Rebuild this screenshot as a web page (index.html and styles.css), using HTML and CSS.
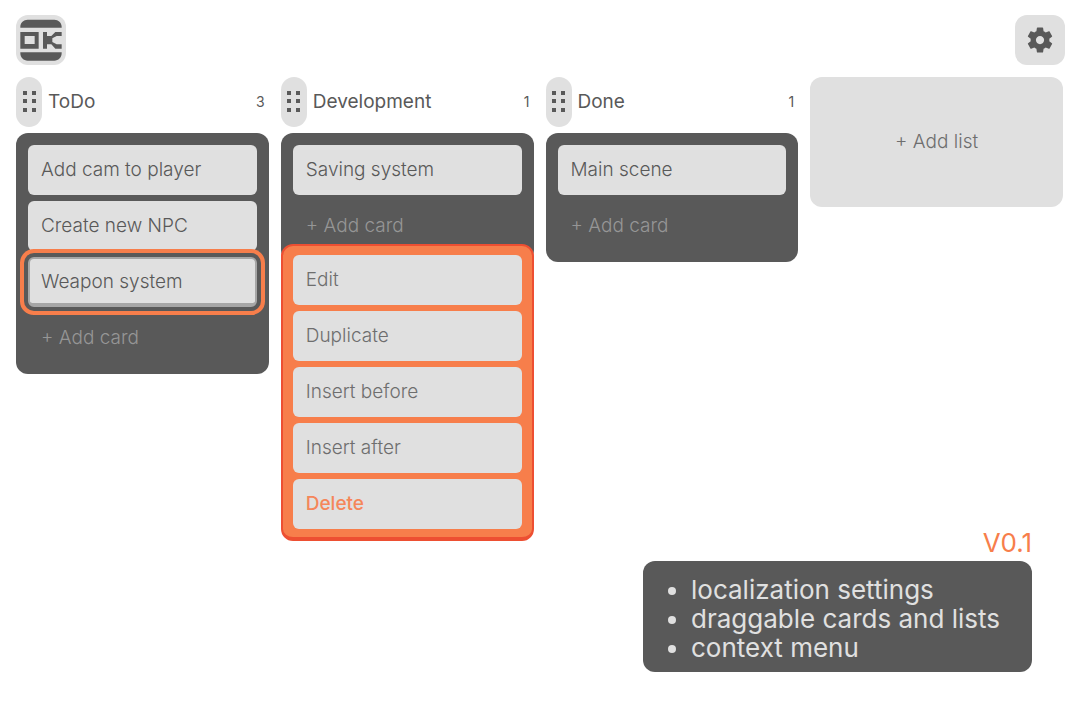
FILE: index.html
```html
<!DOCTYPE html>
<html lang="en">
<head>
<meta charset="utf-8">
<title>Kanban board</title>
<link rel="stylesheet" href="styles.css">
</head>
<body class="app">
<header class="topbar">
  <button class="tile" type="button" aria-label="Home">
    <svg class="logo" viewBox="0 0 148 150" aria-hidden="true">
      <path d="M12 38V35C12 23 22 14 34 14H114C126 14 136 23 136 35V38ZM12 112V115C12 128 22 137 34 137H114C126 137 136 128 136 115V112Z"/>
      <path fill-rule="evenodd" d="M12 51H67V101H12ZM25 63V87H55V63Z"/>
      <path d="M80 51H92V63H105L117 51H136V63H121L108 70V81L121 88H136V101H117L105 88H92V101H80Z"/>
    </svg>
  </button>
  <button class="tile" type="button" aria-label="Settings">
    <svg class="gear" viewBox="0 0 24 24" aria-hidden="true">
      <path d="M19.43 12.98c.04-.32.07-.64.07-.98s-.03-.66-.07-.98l2.11-1.65c.19-.15.24-.42.12-.64l-2-3.46c-.12-.22-.39-.3-.61-.22l-2.49 1c-.52-.4-1.08-.73-1.69-.98l-.38-2.65C14.46 2.18 14.25 2 14 2h-4c-.25 0-.46.18-.49.42l-.38 2.65c-.61.25-1.17.59-1.69.98l-2.49-1c-.23-.09-.49 0-.61.22l-2 3.46c-.13.22-.07.49.12.64l2.11 1.65c-.04.32-.07.65-.07.98s.03.66.07.98l-2.11 1.65c-.19.15-.24.42-.12.64l2 3.46c.12.22.39.3.61.22l2.49-1c.52.4 1.08.73 1.69.98l.38 2.65c.03.24.24.42.49.42h4c.25 0 .46-.18.49-.42l.38-2.65c.61-.25 1.17-.59 1.69-.98l2.49 1c.23.09.49 0 .61-.22l2-3.46c.12-.22.07-.49-.12-.64l-2.11-1.65zM12 15.3c-1.8 0-3.3-1.5-3.3-3.3s1.5-3.3 3.3-3.3 3.3 1.5 3.3 3.3-1.5 3.3-3.3 3.3z"/>
    </svg>
  </button>
</header>

<main class="board">
  <section class="list">
    <div class="list-head">
      <button class="grip" type="button" aria-label="Move ToDo"><svg class="dots" viewBox="0 0 13 21" aria-hidden="true"><path d="M0 0h4v4H0zM9 0h4v4H9zM0 8h4v4H0zM9 8h4v4H9zM0 17h4v4H0zM9 17h4v4H9z"/></svg></button>
      <h2 class="title">ToDo</h2>
      <span class="count">3</span>
    </div>
    <div class="cards">
      <button class="card" type="button">Add cam to player</button>
      <button class="card" type="button">Create new NPC</button>
      <button class="card selected" type="button">Weapon system</button>
      <button class="card add" type="button">+ Add card</button>
    </div>
  </section>

  <section class="list">
    <div class="list-head">
      <button class="grip" type="button" aria-label="Move Development"><svg class="dots" viewBox="0 0 13 21" aria-hidden="true"><path d="M0 0h4v4H0zM9 0h4v4H9zM0 8h4v4H0zM9 8h4v4H9zM0 17h4v4H0zM9 17h4v4H9z"/></svg></button>
      <h2 class="title">Development</h2>
      <span class="count">1</span>
    </div>
    <div class="cards">
      <button class="card" type="button">Saving system</button>
      <button class="card add" type="button">+ Add card</button>
    </div>
    <div class="menu" role="menu">
      <button class="card" type="button" role="menuitem">Edit</button>
      <button class="card" type="button" role="menuitem">Duplicate</button>
      <button class="card" type="button" role="menuitem">Insert before</button>
      <button class="card" type="button" role="menuitem">Insert after</button>
      <button class="card danger" type="button" role="menuitem">Delete</button>
    </div>
  </section>

  <section class="list">
    <div class="list-head">
      <button class="grip" type="button" aria-label="Move Done"><svg class="dots" viewBox="0 0 13 21" aria-hidden="true"><path d="M0 0h4v4H0zM9 0h4v4H9zM0 8h4v4H0zM9 8h4v4H9zM0 17h4v4H0zM9 17h4v4H9z"/></svg></button>
      <h2 class="title">Done</h2>
      <span class="count">1</span>
    </div>
    <div class="cards">
      <button class="card" type="button">Main scene</button>
      <button class="card add" type="button">+ Add card</button>
    </div>
  </section>

  <button class="add-list" type="button">+ Add list</button>
</main>

<footer class="release">
  <p class="version">V0.1</p>
  <ul class="changes">
    <li>localization settings</li>
    <li>draggable cards and lists</li>
    <li>context menu</li>
  </ul>
</footer>
</body>
</html>
```

FILE: styles.css
```css
* { box-sizing: border-box; }

.app {
  margin: 0;
  min-height: 100vh;
  display: flex;
  flex-direction: column;
  background: #fff;
  color: #595959;
  font-family: Inter, "Liberation Sans", sans-serif;
}

button {
  font: inherit;
  color: inherit;
  border: 0;
  padding: 0;
  cursor: pointer;
}

svg { display: block; fill: #595959; }

.topbar {
  display: flex;
  justify-content: space-between;
  padding: 15px 15px 12px 16px;
}

.tile {
  width: 50px;
  height: 50px;
  border-radius: 12px;
  background: #e0e0e0;
  display: grid;
  place-items: center;
}

.logo { width: 50px; height: 50px; }
.gear { width: 30px; height: 30px; }

.board {
  display: grid;
  grid-template-columns: repeat(4, 1fr);
  align-items: start;
  gap: 12px;
  padding: 0 17px 0 16px;
}

.list { position: relative; }

.list-head {
  display: flex;
  align-items: center;
  gap: 6px;
  margin-bottom: 6px;
  padding-right: 4px;
}

.grip {
  width: 26px;
  height: 50px;
  padding-bottom: 2px;
  border-radius: 13px;
  background: #e0e0e0;
  display: grid;
  place-items: center;
  cursor: grab;
}

.dots { width: 13px; height: 21px; }

.title {
  flex: 1;
  margin: 0;
  font-size: 19px;
  line-height: 24px;
  font-weight: 400;
}

.count { font-size: 14px; line-height: 24px; }

.cards,
.menu {
  display: flex;
  flex-direction: column;
  gap: 6px;
  padding: 12px 12px 11px;
  border-radius: 12px;
  background: #595959;
}

.card {
  min-height: 50px;
  padding: 0 13px 2px;
  border-radius: 6px;
  background: #e0e0e0;
  font-size: 19px;
  font-weight: 300;
  text-align: left;
}

.card.selected {
  z-index: 1;
  padding: 0 11px;
  border: 2px solid #a6a6a6;
  border-bottom-width: 4px;
  box-shadow: 0 0 0 4px #595959, 0 0 0 8px #f77e4b;
}

.card.add { background: transparent; color: #969696; }

.menu {
  position: absolute;
  z-index: 2;
  top: 167px;
  left: 0;
  right: 0;
  padding: 9px 10px 8px;
  border: 2px solid #ed4f32;
  border-bottom-width: 4px;
  background: #f77e4b;
}

.menu .card { color: #6e6e6e; }
.menu .danger { color: #f5865a; font-weight: 500; }

.add-list {
  min-height: 130px;
  padding-bottom: 2px;
  border-radius: 12px;
  background: #e0e0e0;
  color: #6e6e6e;
  font-size: 19px;
  font-weight: 300;
}

.release {
  margin: auto 48px 48px auto;
  padding-top: 24px;
}

.version {
  margin: 0 0 4px;
  color: #f77e4b;
  font-size: 26px;
  line-height: 29px;
  text-align: right;
}

.changes {
  margin: 0;
  padding: 14px 32px 10px 48px;
  border-radius: 12px;
  background: #595959;
  color: #e0e0e0;
  font-size: 26px;
  line-height: 29px;
}
```
